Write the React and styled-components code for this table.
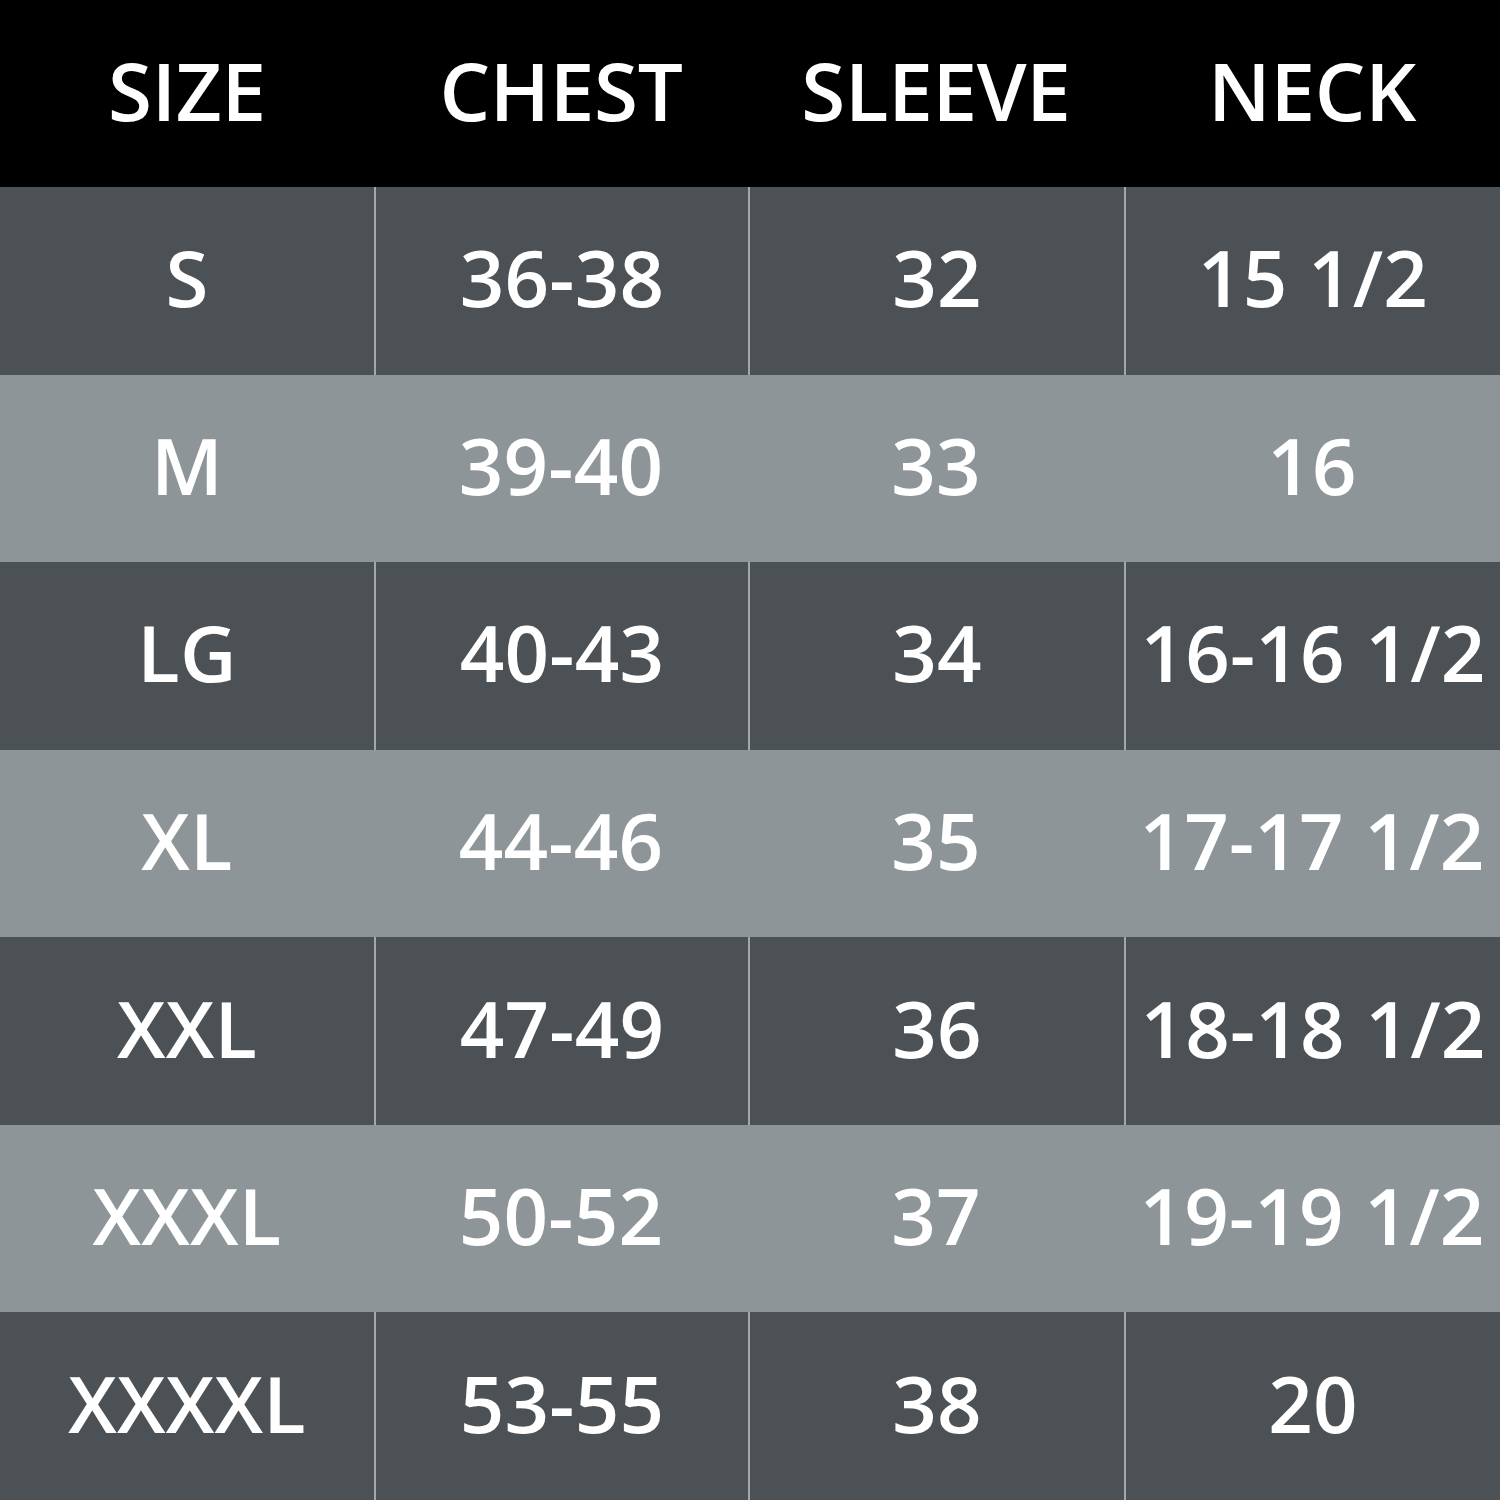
import styled, { createGlobalStyle } from "styled-components";

const GlobalStyle = createGlobalStyle`
  html, body {
    margin: 0;
    padding: 0;
    background: #000;
  }
`;

const Table = styled.div`
  width: 1500px;
  height: 1500px;
  display: grid;
  grid-template-rows: 187px repeat(7, 1fr);
  font-family: "Open Sans", "Noto Sans", sans-serif;
  font-weight: 600;
  color: #fff;
`;

const Row = styled.div`
  display: grid;
  grid-template-columns: 374px 374px 376px 1fr;
  background: ${(p) => (p.$tone === "head" ? "#000" : p.$tone === "light" ? "#8e9599" : "#4c5155")};
`;

const Cell = styled.div`
  display: flex;
  align-items: center;
  justify-content: center;
  font-size: ${(p) => (p.$head ? "80px" : "78px")};
  letter-spacing: ${(p) => (p.$head ? "-0.3px" : "0.2px")};
  line-height: 1;
  white-space: nowrap;
  border-left: ${(p) => (p.$divider ? "2px solid #a2a7aa" : "0")};
  padding-bottom: ${(p) => (p.$head ? "8px" : "7px")};
`;

const headers = ["SIZE", "CHEST", "SLEEVE", "NECK"];

const rows = [
  ["S", "36-38", "32", "15 1/2"],
  ["M", "39-40", "33", "16"],
  ["LG", "40-43", "34", "16-16 1/2"],
  ["XL", "44-46", "35", "17-17 1/2"],
  ["XXL", "47-49", "36", "18-18 1/2"],
  ["XXXL", "50-52", "37", "19-19 1/2"],
  ["XXXXL", "53-55", "38", "20"],
];

export default function App() {
  return (
    <>
      <GlobalStyle />
      <Table>
        <Row $tone="head">
          {headers.map((h) => (
            <Cell key={h} $head>
              {h}
            </Cell>
          ))}
        </Row>
        {rows.map((r, i) => {
          const dark = i % 2 === 0;
          return (
            <Row key={r[0]} $tone={dark ? "dark" : "light"}>
              {r.map((v, j) => (
                <Cell key={j} $divider={dark && j > 0}>
                  {v}
                </Cell>
              ))}
            </Row>
          );
        })}
      </Table>
    </>
  );
}
